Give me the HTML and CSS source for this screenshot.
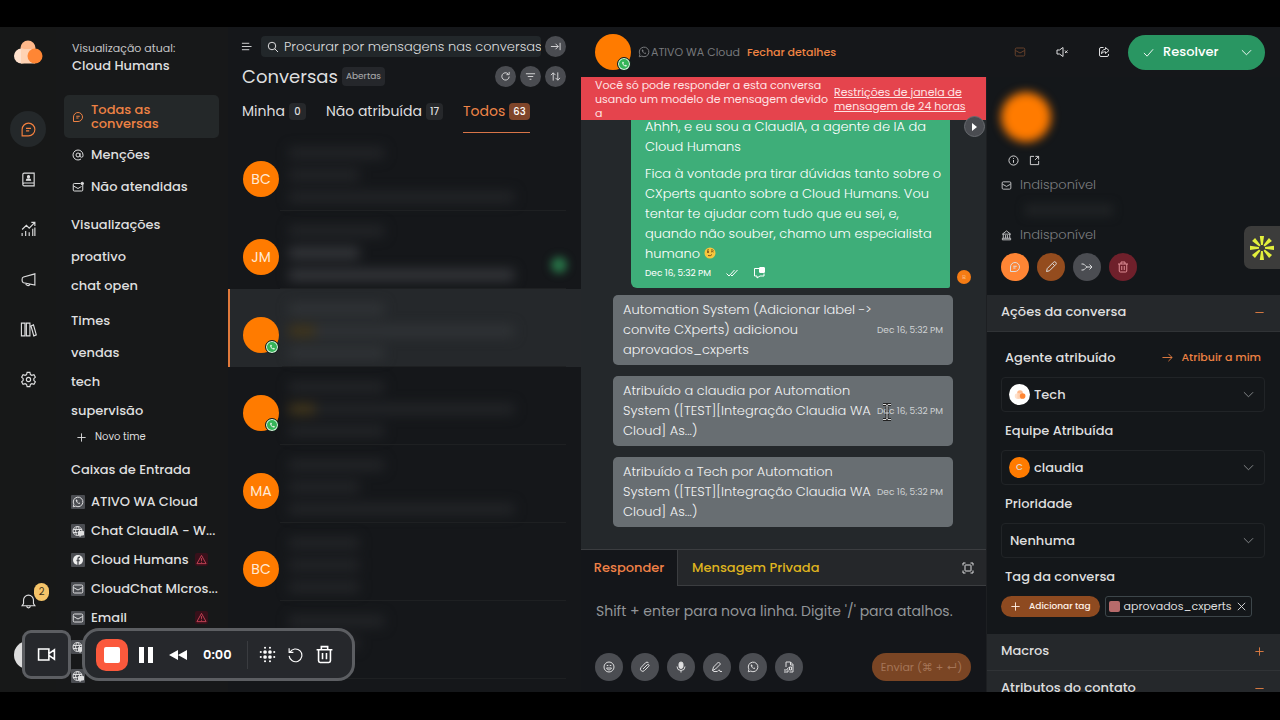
FILE: index.html
```html
<!DOCTYPE html>
<html lang="pt-BR">
<head>
  <meta charset="UTF-8" />
  <meta name="viewport" content="width=device-width, initial-scale=1.0"/>
  <title>Conversas</title>
  <link rel="stylesheet" href="styles.css">
</head>
<body>

  <!-- Icon set -->
  <svg class="sprite" aria-hidden="true">
    <symbol id="chat" viewBox="0 0 24 24"><path d="M3 21V12a9 9 0 1 1 9 9zM8.500 10.500h7M8.500 14h4.500"/></symbol>
    <symbol id="book" viewBox="0 0 24 24"><path d="M4 19V5a2 2 0 0 1 2-2h14v18H6a2 2 0 0 1-2-2zm0 0a2 2 0 0 1 2-2h14"/><circle cx="12" cy="8" r="1.500" fill="currentColor"/><path d="M9 13c0-2.500 6-2.500 6 0z" fill="currentColor"/></symbol>
    <symbol id="chart" viewBox="0 0 24 24"><path d="M3 21v-4M8 21v-7M13 21v-5M18 21V11M21 21V9M3 12l6-6 4 4 8-8M16 2h5v5"/></symbol>
    <symbol id="horn" viewBox="0 0 24 24"><path d="M21 4v16L5 16.500a3 3 0 0 1-2-3v-2a3 3 0 0 1 2-3zM8 17c0 4 5 5 6 1.500"/></symbol>
    <symbol id="library" viewBox="0 0 24 24"><path d="M2 3h5v18H2zM9 3h5v18H9zM15.500 7l3.500-1.500 4 14-3.500 1.500z"/></symbol>
    <symbol id="gear" viewBox="0 0 24 24"><circle cx="12" cy="12" r="3"/><path d="M10 2h4l.7 3 2 1.100 3-.8 2 3.400-2.200 2.200v2.200l2.200 2.200-2 3.400-3-.8-2 1.100L14 22h-4l-.7-3-2-1.100-3 .8-2-3.400 2.200-2.200v-2.200L2.300 8.700l2-3.400 3 .8 2-1.100z"/></symbol>
    <symbol id="bell" viewBox="0 0 24 24"><path d="M3 18h18l-2-3v-5a7 7 0 0 0-14 0v5zM9.500 18.500a2.500 2.500 0 0 0 5 0"/></symbol>
    <symbol id="at" viewBox="0 0 24 24"><circle cx="12" cy="12" r="4"/><path d="M16 8v5.500a3 3 0 0 0 6 0V12a10 10 0 1 0-4 8"/></symbol>
    <symbol id="mail" viewBox="0 0 24 24"><rect x="2.500" y="4" width="19" height="16" rx="2.500"/><path d="M3 9l9 5 9-5"/></symbol>
    <symbol id="mail-dot" viewBox="0 0 24 24"><path d="M17 5H4.500A2 2 0 0 0 2.500 7v11a2 2 0 0 0 2 2h15a2 2 0 0 0 2-2V8M3 10l9 5 7-4"/><circle cx="20.500" cy="5" r="2.500" fill="currentColor"/></symbol>
    <symbol id="plus" viewBox="0 0 24 24"><path d="M12 3v18M3 12h18"/></symbol>
    <symbol id="minus" viewBox="0 0 24 24"><path d="M3 12h18"/></symbol>
    <symbol id="close" viewBox="0 0 24 24"><path d="M4 4l16 16M20 4L4 20"/></symbol>
    <symbol id="whats" viewBox="0 0 24 24"><path d="M2.500 21.500l1.300-5A9.600 9.600 0 1 1 7.500 20.200z"/><path d="M8.500 7c-1.500 1-1.200 3.500 1.200 6s5 3.700 6.300 2.200c.7-.9.300-1.200-1.700-2.200l-1.200 1.200c-1.200-.5-2.300-1.600-2.800-2.800l1.100-1.300C10.500 7.500 9.500 6.500 8.500 7z" fill="currentColor" stroke="none"/></symbol>
    <symbol id="phone" viewBox="0 0 24 24"><path d="M7 3c-4 2-3 9 3 14.500s11 6 13 2c1-2 0-3-4.500-5l-3 3c-3-1.500-5.500-4-6.500-7l3-3C10.500 3 9 2 7 3z" fill="currentColor" stroke="none"/></symbol>
    <symbol id="globe" viewBox="0 0 24 24"><circle cx="11" cy="12" r="9"/><path d="M2 9h18M2 15h9M11 3c-5 5-5 13 0 18M11 3c3 3 4 6 4 9"/><path d="M13 13h10v7h-4l-3 3v-3h-3z" fill="currentColor"/></symbol>
    <symbol id="facebook" viewBox="0 0 24 24"><circle cx="12" cy="12" r="10" fill="#eee" stroke="none"/><path d="M16 6.500h-1.500c-2 0-2.500 1-2.500 2.500v13M9 13h6.500" stroke="#4b4d52" stroke-width="2.600"/></symbol>
    <symbol id="warn" viewBox="0 0 24 24"><path d="M12 3L2 21h20zM12 9v6M12 17v2"/></symbol>
    <symbol id="menu" viewBox="0 0 24 24"><path d="M2 5h16M2 12h21M2 19h16"/></symbol>
    <symbol id="search" viewBox="0 0 24 24"><circle cx="10" cy="10" r="7.500"/><path d="M15.500 15.500L22 22"/></symbol>
    <symbol id="to-right" viewBox="0 0 24 24"><path d="M2 12h16M12 6l6 6-6 6M22 4v16"/></symbol>
    <symbol id="refresh" viewBox="0 0 24 24"><path d="M20 12a8 8 0 1 1-2.500-6M20 2v6h-6"/></symbol>
    <symbol id="filter" viewBox="0 0 24 24"><path d="M2 6h20M6 12h12M10 18h4"/></symbol>
    <symbol id="sort" viewBox="0 0 24 24"><path d="M7 21V4M2 9l5-5 5 5M17 3v17M12 15l5 5 5-5"/></symbol>
    <symbol id="mute" viewBox="0 0 24 24"><path d="M2 8h5l7-5v18l-7-5H2zM18 9l5 5M23 9l-5 5"/></symbol>
    <symbol id="share" viewBox="0 0 24 24"><path d="M11 3H6a3 3 0 0 0-3 3v12a3 3 0 0 0 3 3h12a3 3 0 0 0 3-3v-2M15 3l7 6-7 6v-3.500c-4 0-6 1-8 4 0-5 3-9 8-9z"/></symbol>
    <symbol id="check" viewBox="0 0 24 24"><path d="M2 13l7 7L22 5"/></symbol>
    <symbol id="checks" viewBox="0 0 24 24"><path d="M1 13l5 5L17 6M10 16l2 2L23 6"/></symbol>
    <symbol id="bubble" viewBox="0 0 24 24"><path d="M12 3H3v15h5v4l6-4h8v-5"/><rect x="13" y="1" width="10" height="10" rx="1" fill="currentColor"/></symbol>
    <symbol id="down" viewBox="0 0 24 24"><path d="M2 7l10 10L22 7"/></symbol>
    <symbol id="info" viewBox="0 0 24 24"><circle cx="12" cy="12" r="10"/><path d="M12 11v6M12 6.500v2"/></symbol>
    <symbol id="open" viewBox="0 0 24 24"><path d="M11 3H3v18h18v-8M14 3h7v7M21 3l-8 8"/></symbol>
    <symbol id="bank" viewBox="0 0 24 24"><path d="M12 2L3 9h18zM5 9v9M10 11v7M14 11v7M19 9v9M3 18h18v3.500H3z"/></symbol>
    <symbol id="pencil" viewBox="0 0 24 24"><path d="M3 21l1.500-6L17 2.500a2.500 2.500 0 0 1 4.500 4.500L9 19.500zM15 5l4 4"/></symbol>
    <symbol id="merge" viewBox="0 0 24 24"><path d="M1 6h3c4 0 5 6 9 6h9M1 18h3c4 0 5-6 9-6M17 7l5 5-5 5"/></symbol>
    <symbol id="trash" viewBox="0 0 24 24"><path d="M2 6h20M8 6V2h8v4M4.500 6v14a2 2 0 0 0 2 2h11a2 2 0 0 0 2-2V6M9.500 10v8M14.500 10v8"/></symbol>
    <symbol id="arrow" viewBox="0 0 24 24"><path d="M1 12h21M14 4l8 8-8 8"/></symbol>
    <symbol id="expand" viewBox="0 0 24 24"><rect x="6" y="6" width="12" height="12" rx="1"/><path d="M2 7V2h5M17 2h5v5M22 17v5h-5M7 22H2v-5"/></symbol>
    <symbol id="smile" viewBox="0 0 24 24"><circle cx="12" cy="12" r="10"/><path d="M7 14c2 5 8 5 10 0zM7.500 9h3M13.500 9h3"/></symbol>
    <symbol id="clip" viewBox="0 0 24 24"><path d="M8 16l8.500-8.500a2 2 0 0 1 3 3L11 19a4.500 4.500 0 0 1-7-6l9-9.500a4.500 4.500 0 0 1 6 0"/></symbol>
    <symbol id="mic" viewBox="0 0 24 24"><rect x="8" y="2" width="8" height="13" rx="4" fill="currentColor"/><path d="M4 11a8 8 0 0 0 16 0M12 19v4"/></symbol>
    <symbol id="sign" viewBox="0 0 24 24"><path d="M3 19l2-7L15 2l4 4L9 16zM3 19l3 2h6c2 0 2-3 5-3l1 3h4"/></symbol>
    <symbol id="file" viewBox="0 0 24 24"><path d="M6 12V2h9l5 5v15h-7M15 2v6h5M2 18h5l4-5M2 22h8v-5M13 12v6h4v-6z"/></symbol>
    <symbol id="camera" viewBox="0 0 24 24"><path d="M2 5h13v14H2zM15 11l7-5v12l-7-5z"/></symbol>
    <symbol id="blur" viewBox="0 0 24 24"><g fill="currentColor" stroke="none"><circle cx="8.500" cy="8.500" r="2.600"/><circle cx="15.500" cy="8.500" r="2.600"/><circle cx="8.500" cy="15.500" r="2.600"/><circle cx="15.500" cy="15.500" r="2.600"/><circle cx="8.500" cy="2.500" r="1.500"/><circle cx="15.500" cy="2.500" r="1.500"/><circle cx="8.500" cy="21.500" r="1.500"/><circle cx="15.500" cy="21.500" r="1.500"/><circle cx="2.500" cy="8.500" r="1.500"/><circle cx="2.500" cy="15.500" r="1.500"/><circle cx="21.500" cy="8.500" r="1.500"/><circle cx="21.500" cy="15.500" r="1.500"/></g></symbol>
    <symbol id="undo" viewBox="0 0 24 24"><path d="M4 9a9 9 0 1 1-1 5M3 3v6h6"/></symbol>
    <symbol id="cloud" viewBox="0 0 30 24"><circle cx="15" cy="8" r="7.500" fill="#ffb88a"/><circle cx="8.500" cy="16" r="7.500" fill="#ffe1cd"/><path d="M8 9h14v14.500H8z" fill="#ffd2b3"/><circle cx="22" cy="16" r="7.500" fill="#ff8634"/></symbol>
  </svg>

  <div class="app">

    <!-- Icon rail -->
    <nav class="rail" aria-label="Principal">
      <svg class="logo"><use href="#cloud"/></svg>
      <button class="rail-btn active" aria-label="Conversas"><svg class="icon md"><use href="#chat"/></svg></button>
      <button class="rail-btn" aria-label="Contatos"><svg class="icon md"><use href="#book"/></svg></button>
      <button class="rail-btn" aria-label="Relatórios"><svg class="icon md"><use href="#chart"/></svg></button>
      <button class="rail-btn" aria-label="Campanhas"><svg class="icon md"><use href="#horn"/></svg></button>
      <button class="rail-btn" aria-label="Ajuda"><svg class="icon md"><use href="#library"/></svg></button>
      <button class="rail-btn" aria-label="Configurações"><svg class="icon md"><use href="#gear"/></svg></button>
      <button class="rail-btn bell" aria-label="Notificações"><svg class="icon md"><use href="#bell"/></svg><span class="count">2</span></button>
      <span class="me"></span>
    </nav>

    <!-- Sidebar -->
    <aside class="sidebar">
      <div class="account">
        <p>Visualização atual:</p>
        <strong>Cloud Humans</strong>
      </div>
      <a class="main-link active" href="#"><svg class="icon sm"><use href="#chat"/></svg><span>Todas as<br>conversas</span></a>
      <a class="main-link" href="#"><svg class="icon sm"><use href="#at"/></svg>Menções</a>
      <a class="main-link" href="#"><svg class="icon sm"><use href="#mail-dot"/></svg>Não atendidas</a>

      <h2>Visualizações</h2>
      <a class="side-link" href="#">proativo</a>
      <a class="side-link" href="#">chat open</a>

      <h2>Times</h2>
      <a class="side-link" href="#">vendas</a>
      <a class="side-link" href="#">tech</a>
      <a class="side-link" href="#">supervisão</a>
      <button class="new-team"><svg class="icon xs"><use href="#plus"/></svg>Novo time</button>

      <h2>Caixas de Entrada</h2>
      <a class="side-link" href="#"><i class="box"><svg class="icon sm"><use href="#whats"/></svg></i>ATIVO WA Cloud</a>
      <a class="side-link" href="#"><i class="box"><svg class="icon sm"><use href="#globe"/></svg></i>Chat ClaudIA - W...</a>
      <a class="side-link" href="#"><i class="box"><svg class="icon sm"><use href="#facebook"/></svg></i>Cloud Humans<i class="alert"><svg class="icon xs"><use href="#warn"/></svg></i></a>
      <a class="side-link" href="#"><i class="box"><svg class="icon sm"><use href="#mail"/></svg></i>CloudChat MIcros...</a>
      <a class="side-link" href="#"><i class="box"><svg class="icon sm"><use href="#mail"/></svg></i>Email<i class="alert"><svg class="icon xs"><use href="#warn"/></svg></i></a>
      <a class="side-link" href="#" aria-label="Site"><i class="box"><svg class="icon sm"><use href="#globe"/></svg></i></a>
      <a class="side-link" href="#" aria-label="Site"><i class="box"><svg class="icon sm"><use href="#globe"/></svg></i></a>
    </aside>

    <!-- Conversation list -->
    <section class="list">
      <div class="list-search">
        <button class="plain" aria-label="Menu"><svg class="icon xs"><use href="#menu"/></svg></button>
        <label class="search"><svg class="icon sm"><use href="#search"/></svg><input type="text" aria-label="Procurar" placeholder="Procurar por mensagens nas conversas"></label>
        <button class="round" aria-label="Recolher"><svg class="icon xs"><use href="#to-right"/></svg></button>
      </div>
      <div class="list-title">
        <h1>Conversas</h1>
        <span class="status">Abertas</span>
        <div class="tools">
          <button class="round" aria-label="Atualizar"><svg class="icon xs"><use href="#refresh"/></svg></button>
          <button class="round" aria-label="Filtrar"><svg class="icon xs"><use href="#filter"/></svg></button>
          <button class="round" aria-label="Ordenar"><svg class="icon xs"><use href="#sort"/></svg></button>
        </div>
      </div>
      <div class="tabs">
        <button class="tab">Minha <span>0</span></button>
        <button class="tab">Não atribuída <span>17</span></button>
        <button class="tab active">Todos <span>63</span></button>
      </div>

      <div class="rows">
        <article class="row"><span class="avatar">BC</span><div class="hidden-text"><i class="w-m"></i><i class="w-s"></i><i class="w-l"></i></div></article>
        <article class="row"><span class="avatar">JM</span><div class="hidden-text bright"><i class="w-m"></i><i class="w-s"></i><i class="w-l"></i></div><span class="unread"></span></article>
        <article class="row selected"><span class="avatar"><b class="wa"><svg class="icon"><use href="#phone"/></svg></b></span><div class="hidden-text"><i class="w-m"></i><i class="w-l emoji"></i><i class="w-m"></i></div></article>
        <article class="row"><span class="avatar"><b class="wa"><svg class="icon"><use href="#phone"/></svg></b></span><div class="hidden-text"><i class="w-m"></i><i class="w-l emoji"></i><i class="w-m"></i></div></article>
        <article class="row"><span class="avatar">MA</span><div class="hidden-text"><i class="w-m"></i><i class="w-s"></i><i class="w-l"></i></div></article>
        <article class="row"><span class="avatar">BC</span><div class="hidden-text"><i class="w-s"></i><i class="w-s"></i><i class="w-s"></i></div></article>
        <article class="row"><span class="avatar"></span><div class="hidden-text"><i class="w-m"></i><i class="w-s"></i></div></article>
      </div>
    </section>

    <!-- Open conversation -->
    <main class="conversation">
      <header class="topbar">
        <span class="avatar"><b class="wa"><svg class="icon"><use href="#phone"/></svg></b></span>
        <span class="inbox"><svg class="icon sm"><use href="#whats"/></svg>ATIVO WA Cloud</span>
        <button class="plain details-link">Fechar detalhes</button>
        <div class="top-actions">
          <button class="plain dim" aria-label="Email"><svg class="icon sm"><use href="#mail"/></svg></button>
          <button class="plain" aria-label="Silenciar"><svg class="icon sm"><use href="#mute"/></svg></button>
          <button class="plain" aria-label="Compartilhar"><svg class="icon sm"><use href="#share"/></svg></button>
          <div class="resolve">
            <button><svg class="icon xs"><use href="#check"/></svg>Resolver</button>
            <button aria-label="Mais opções"><svg class="icon xs"><use href="#down"/></svg></button>
          </div>
        </div>
      </header>

      <div class="panes">
        <section class="chat">
          <div class="banner">
            <p>Você só pode responder a esta conversa<br>usando um modelo de mensagem devido<br>a</p>
            <a href="#">Restrições de janela de<br>mensagem de 24 horas</a>
          </div>
          <div class="messages">
            <div class="sent">
              <div class="bubble">
                <p>Ahhh, e eu sou a ClaudIA, a agente de IA da<br>Cloud Humans</p>
                <p>Fica à vontade pra tirar dúvidas tanto sobre o<br>CXperts quanto sobre a Cloud Humans. Vou<br>tentar te ajudar com tudo que eu sei, e,<br>quando não souber, chamo um especialista<br>humano
                  <svg class="face" viewBox="0 0 24 24"><circle cx="12" cy="12" r="11" fill="#f8c63d"/><circle cx="8" cy="10" r="1.800" fill="#5d3b12"/><path d="M14 10q2.500-2 5 0M6 6.500l4-1M14 6q3-1 5 1M8 17q5 2 8-2" fill="none" stroke="#5d3b12" stroke-width="1.600"/></svg></p>
                <div class="meta"><time>Dec 16, 5:32 PM</time><svg class="icon sm"><use href="#checks"/></svg><svg class="icon sm"><use href="#bubble"/></svg></div>
              </div>
              <span class="bot">B</span>
            </div>
            <div class="activity"><p>Automation System (Adicionar label -&gt;<br>convite CXperts) adicionou<br>aprovados_cxperts</p><time>Dec 16, 5:32 PM</time></div>
            <div class="activity"><p>Atribuído a claudia por Automation<br>System ([TEST][Integração Claudia WA<br>Cloud] As...)</p><time>Dec 16, 5:32 PM</time>
              <svg class="cursor" viewBox="0 0 10 18"><path d="M1 1.500h3l1 1 1-1h3M1 16.500h3l1-1 1 1h3M5 2v14M3 10h4" stroke="#222" stroke-width="3" fill="none"/><path d="M1 1.500h3l1 1 1-1h3M1 16.500h3l1-1 1 1h3M5 2v14M3 10h4" stroke="#ddd" fill="none"/></svg></div>
            <div class="activity"><p>Atribuído a Tech por Automation<br>System ([TEST][Integração Claudia WA<br>Cloud] As...)</p><time>Dec 16, 5:32 PM</time></div>
          </div>
          <button class="toggle" aria-label="Alternar painel"></button>

          <div class="composer">
            <div class="reply-tabs">
              <button class="reply">Responder</button>
              <div class="reply-rest">
                <button class="private">Mensagem Privada</button>
                <button class="plain" aria-label="Expandir"><svg class="icon sm"><use href="#expand"/></svg></button>
              </div>
            </div>
            <textarea aria-label="Mensagem" placeholder="Shift + enter para nova linha. Digite '/' para atalhos."></textarea>
            <div class="reply-tools">
              <button aria-label="Emoji"><svg class="icon sm"><use href="#smile"/></svg></button>
              <button aria-label="Anexo"><svg class="icon sm"><use href="#clip"/></svg></button>
              <button aria-label="Áudio"><svg class="icon sm"><use href="#mic"/></svg></button>
              <button aria-label="Assinatura"><svg class="icon sm"><use href="#sign"/></svg></button>
              <button aria-label="WhatsApp"><svg class="icon sm"><use href="#whats"/></svg></button>
              <button aria-label="Arquivo"><svg class="icon sm"><use href="#file"/></svg></button>
              <button class="send">Enviar (⌘ + ↵)</button>
            </div>
          </div>
        </section>

        <!-- Contact details -->
        <aside class="details">
          <div class="contact">
            <span class="photo"></span>
            <div class="contact-icons"><svg class="icon xs"><use href="#info"/></svg><svg class="icon xs"><use href="#open"/></svg></div>
            <p><svg class="icon xs"><use href="#mail"/></svg>Indisponível</p>
            <span class="phone"></span>
            <p><svg class="icon xs"><use href="#bank"/></svg>Indisponível</p>
            <div class="contact-actions">
              <button class="orange" aria-label="Nova mensagem"><svg class="icon sm"><use href="#chat"/></svg></button>
              <button class="brown" aria-label="Editar"><svg class="icon sm"><use href="#pencil"/></svg></button>
              <button class="gray" aria-label="Mesclar"><svg class="icon sm"><use href="#merge"/></svg></button>
              <button class="wine" aria-label="Excluir"><svg class="icon sm"><use href="#trash"/></svg></button>
            </div>
          </div>

          <button class="section-head">Ações da conversa<svg class="icon xs"><use href="#minus"/></svg></button>
          <div class="fields">
            <div class="field-top">
              <label for="agent">Agente atribuído</label>
              <button class="plain assign"><svg class="icon xs"><use href="#arrow"/></svg>Atribuir a mim</button>
            </div>
            <div class="select has-pic">
              <span class="pic white"><svg><use href="#cloud"/></svg></span>
              <select id="agent"><option>Tech</option></select>
              <svg class="icon xs"><use href="#down"/></svg>
            </div>
            <div class="field-top"><label for="team">Equipe Atribuída</label></div>
            <div class="select has-pic">
              <span class="pic">C</span>
              <select id="team"><option>claudia</option></select>
              <svg class="icon xs"><use href="#down"/></svg>
            </div>
            <div class="field-top"><label for="priority">Prioridade</label></div>
            <div class="select">
              <select id="priority"><option>Nenhuma</option></select>
              <svg class="icon xs"><use href="#down"/></svg>
            </div>
            <div class="field-top"><h3>Tag da conversa</h3></div>
            <div class="tags">
              <button class="add-tag"><svg class="icon xs"><use href="#plus"/></svg>Adicionar tag</button>
              <span class="tag"><i></i>aprovados_cxperts<button class="plain" aria-label="Remover tag"><svg class="icon xs"><use href="#close"/></svg></button></span>
            </div>
          </div>
          <button class="section-head">Macros<svg class="icon xs"><use href="#plus"/></svg></button>
          <button class="section-head">Atributos do contato<svg class="icon xs"><use href="#minus"/></svg></button>
        </aside>
      </div>
    </main>
  </div>

  <!-- Screen recorder -->
  <div class="recorder">
    <button class="cam" aria-label="Câmera"><svg class="icon lg"><use href="#camera"/></svg></button>
    <div class="controls">
      <button class="stop" aria-label="Parar"></button>
      <button class="pause" aria-label="Pausar"></button>
      <button class="plain" aria-label="Voltar"><svg class="rewind" viewBox="0 0 20 12"><path d="M10 1v10L1 6zM19 1v10l-9-5z"/></svg></button>
      <span class="time">0:00</span>
      <span class="divider"></span>
      <button class="plain" aria-label="Desfocar"><svg class="icon md"><use href="#blur"/></svg></button>
      <button class="plain" aria-label="Reiniciar"><svg class="icon md"><use href="#undo"/></svg></button>
      <button class="plain" aria-label="Descartar"><svg class="icon lg"><use href="#trash"/></svg></button>
    </div>
  </div>

  <button class="widget" aria-label="Assistente">
    <svg viewBox="-12 -12 24 24">
      <g id="ray"><path d="M-1 -3L-2.200 -12H2L.8 -3z"/><path d="M-1 3L-2.200 12H2L.8 3z"/></g>
      <use href="#ray" transform="rotate(45)"/><use href="#ray" transform="rotate(90)"/><use href="#ray" transform="rotate(135)"/>
    </svg>
  </button>

</body>
</html>
```
FILE: styles.css
```css
* {
  box-sizing: border-box;
  margin: 0;
  padding: 0;
}

body {
  display: flex;
  height: 100vh;
  padding: 27px 0 28px;
  overflow: hidden;
  background: #000;
  color: #dededf;
  font-family: Poppins, Inter, sans-serif;
  font-size: 13px;
}

button, input, textarea, select {
  font: inherit;
  color: inherit;
  background: none;
  border: none;
  outline: none;
}

button {
  cursor: pointer;
  display: flex;
  align-items: center;
  justify-content: center;
  white-space: nowrap;
}

a {
  color: inherit;
  text-decoration: none;
}

i {
  font-style: normal;
}

.sprite {
  position: absolute;
  width: 0;
  height: 0;
}

.icon {
  flex: none;
  fill: none;
  stroke: currentColor;
  stroke-width: 1.6;
}

.icon.xs { width: 11px; height: 11px; stroke-width: 2; }
.icon.sm { width: 12px; height: 12px; stroke-width: 2; }
.icon.md { width: 17px; height: 17px; }
.icon.lg { width: 19px; height: 19px; stroke-width: 2; }

.app {
  flex: 1;
  min-width: 0;
  display: flex;
  overflow: hidden;
  background: #15171a;
}

/* Icon rail */
.rail {
  width: 56px;
  flex: none;
  display: flex;
  flex-direction: column;
  align-items: center;
  gap: 14px;
  padding-top: 13px;
  background: #171818;
}

.logo {
  width: 30px;
  height: 24px;
  margin-bottom: 33px;
}

.rail-btn {
  position: relative;
  width: 36px;
  height: 36px;
  flex: none;
  border-radius: 50%;
}

.rail-btn.active {
  background: #24282a;
  color: #f5813f;
}

.bell {
  margin-top: auto;
  margin-bottom: 8px;
}

.count {
  position: absolute;
  top: 0;
  right: -3px;
  width: 15px;
  line-height: 18px;
  border-radius: 8px;
  background: #f5c469;
  color: #3d3018;
  font-size: 10px;
}

.me {
  width: 28px;
  height: 28px;
  margin-bottom: 23px;
  border-radius: 50%;
  background: #ddd;
}

/* Sidebar */
.sidebar {
  width: 172px;
  flex: none;
  padding: 13px 9px 0 8px;
  overflow: hidden;
  background: #171819;
  font-weight: 500;
}

.account {
  padding: 0 8px;
  margin-bottom: 21px;
  line-height: 17px;
}

.account p {
  font-size: 11px;
  font-weight: 400;
  line-height: 17px;
  color: #c4c4c6;
}

.account strong {
  display: block;
  font-weight: 500;
}

.main-link {
  display: flex;
  align-items: center;
  gap: 7px;
  height: 32px;
  padding: 0 8px;
}

.main-link.active {
  height: 43px;
  margin-bottom: 1px;
  border-radius: 5px;
  line-height: 14px;
  background: #242829;
  color: #ee8244;
}

.sidebar h2 {
  font-size: 13px;
  font-weight: 500;
  line-height: 20px;
  padding: 0 7px;
  margin: 11px 0 7px;
}

.main-link + h2 {
  margin-top: 12px;
}

.side-link {
  display: flex;
  align-items: center;
  height: 29px;
  gap: 6px;
  padding: 0 7px;
  white-space: nowrap;
}

.new-team {
  height: 24px;
  gap: 8px;
  padding: 0 12px;
  font-size: 10px;
  font-weight: 400;
}

.box {
  display: flex;
  padding: 1px;
  border-radius: 1px;
  background: #4b4d52;
}

.alert {
  margin-left: auto;
  margin-right: 4px;
  padding: 1px;
  display: flex;
  border-radius: 2px;
  background: #38101a;
  color: #c84457;
}

/* Conversation list */
.list {
  width: 353px;
  flex: none;
  display: flex;
  flex-direction: column;
  overflow: hidden;
  background: #15171a;
}

.list-search {
  display: flex;
  align-items: center;
  gap: 4px;
  padding: 9px 15px 0 13px;
}

.plain {
  flex: none;
}

.search {
  flex: 1;
  min-width: 0;
  display: flex;
  align-items: center;
  gap: 5px;
  height: 21px;
  margin-left: 5px;
  padding: 0 0 0 6px;
  border-radius: 4px;
  background: #22272a;
}

.search input {
  flex: 1;
  min-width: 0;
  font-weight: 300;
}

.search input::placeholder {
  color: #dcdddf;
}

.round {
  width: 21px;
  height: 21px;
  flex: none;
  border-radius: 50%;
  background: #4a4c51;
}

.list-title {
  display: flex;
  align-items: center;
  gap: 4px;
  height: 21px;
  margin: 9px 15px 0 14px;
}

.list-title h1 {
  font-size: 18px;
  font-weight: 400;
}

.status {
  padding: 0 4px;
  line-height: 19px;
  border-radius: 4px;
  background: #25272b;
  color: #adaeb0;
  font-size: 9px;
}

.tools {
  display: flex;
  gap: 4px;
  margin-left: auto;
}

.tabs {
  display: flex;
  gap: 20px;
  height: 46px;
  margin: 0 15px 0 14px;
}

.tab {
  gap: 4px;
  padding-top: 4px;
  border-bottom: 1px solid transparent;
  font-size: 14px;
}

.tab span {
  min-width: 17px;
  padding: 0 4px;
  border-radius: 4px;
  background: #26282b;
  font-size: 10px;
  font-weight: 500;
  line-height: 17px;
}

.tab.active {
  color: #ef8548;
  border-bottom-color: #d87548;
}

.tab.active span {
  background: #7f452a;
  color: #fff;
}

.rows {
  flex: 1;
  overflow: hidden;
}

.row {
  position: relative;
  display: flex;
  gap: 10px;
  height: 78px;
  padding: 0 15px;
}

.row::after {
  content: "";
  position: absolute;
  bottom: 0;
  left: 52px;
  right: 15px;
  height: 1px;
  background: #1e2022;
}

.row.selected {
  background: #25282b;
  border-left: 2px solid #e0793b;
  padding-left: 13px;
}

.row .avatar {
  margin-top: 28px;
}

.avatar {
  position: relative;
  display: flex;
  align-items: center;
  justify-content: center;
  width: 36px;
  height: 36px;
  flex: none;
  border-radius: 50%;
  background: #ff7b00;
  color: #ffe9d5;
  font-size: 14px;
}

.wa {
  position: absolute;
  right: 0;
  bottom: -1px;
  display: flex;
  align-items: center;
  justify-content: center;
  width: 14px;
  height: 14px;
  border: 1px solid #15171a;
  border-radius: 50%;
  background: #35b458;
  box-shadow: inset 0 0 0 1px #e6f6ea;
  color: #e6f6ea;
}

.wa .icon {
  width: 6px;
  height: 6px;
}

.hidden-text {
  flex: 1;
  display: flex;
  flex-direction: column;
  gap: 10px;
  padding-top: 14px;
  filter: blur(6px);
}

.hidden-text i {
  height: 12px;
  background: #222427;
}

.bright i + i {
  background: #34363a;
}

.selected .hidden-text i {
  background: #303336;
}

.w-s { width: 70px; }
.w-m { width: 95px; }
.w-l { width: 225px; }

.hidden-text .emoji {
  border-left: 26px solid #41361d;
}

.unread {
  position: absolute;
  right: 14px;
  top: 46px;
  width: 16px;
  height: 16px;
  border-radius: 50%;
  background: #287548;
  filter: blur(4px);
}

/* Conversation */
.conversation {
  flex: 1;
  min-width: 0;
  display: flex;
  flex-direction: column;
}

.topbar {
  display: flex;
  align-items: center;
  height: 50px;
  flex: none;
  padding: 0 15px 0 14px;
}

.inbox {
  display: flex;
  align-items: center;
  gap: 1px;
  margin: 0 7px;
  color: #77797c;
  font-size: 11px;
  white-space: nowrap;
}

.details-link {
  color: #ef8443;
  font-size: 11px;
  font-weight: 500;
}

.top-actions {
  display: flex;
  align-items: center;
  gap: 30px;
  margin-left: auto;
}

.dim {
  color: #66412b;
}

.resolve {
  display: flex;
  justify-content: space-between;
  width: 137px;
  height: 35px;
  margin-left: -12px;
  padding: 0 13px 0 15px;
  border-radius: 18px;
  background: #299662;
  color: #fff;
}

.resolve button {
  gap: 9px;
  font-weight: 500;
}

.panes {
  flex: 1;
  min-height: 0;
  display: flex;
}

.chat {
  position: relative;
  flex: 1;
  min-width: 0;
  display: flex;
  flex-direction: column;
}

.banner {
  display: flex;
  align-items: center;
  gap: 6px;
  height: 43px;
  flex: none;
  padding-left: 14px;
  background: #e5444d;
  color: #ffe3e4;
  font-size: 11px;
  line-height: 14px;
  white-space: nowrap;
}

.banner p {
  flex: none;
}

.banner a {
  text-decoration: underline;
}

.messages {
  flex: 1;
  min-height: 0;
  display: flex;
  flex-direction: column;
  justify-content: flex-end;
  gap: 11px;
  overflow: hidden;
  padding: 0 33px 22px 32px;
  background: #24282b;
  font-weight: 300;
  line-height: 20px;
}

.sent {
  position: relative;
  display: flex;
  align-items: flex-end;
  justify-content: flex-end;
  flex: none;
  margin: 0 3px -4px 0;
}

.bubble {
  width: 319px;
  padding: 10px 14px 6px;
  border-radius: 6px 0 2px 6px;
  background: #3eae79;
  color: #fff;
  white-space: nowrap;
}

.bubble p {
  margin-bottom: 7px;
}

.bubble p + p {
  margin-bottom: 0;
}

.face {
  width: 12px;
  height: 12px;
  vertical-align: -1px;
}

.meta {
  display: flex;
  align-items: center;
  gap: 15px;
  height: 18px;
}

time {
  font-size: 9px;
  font-weight: 400;
  white-space: nowrap;
}

.bot {
  position: absolute;
  right: -21px;
  bottom: 4px;
  width: 14px;
  height: 14px;
  border-radius: 50%;
  background: #f57c14;
  color: #ffc99b;
  font-size: 6px;
  line-height: 14px;
  text-align: center;
}

.activity {
  position: relative;
  display: flex;
  align-items: center;
  justify-content: space-between;
  flex: none;
  padding: 5px 10px;
  border-radius: 5px;
  background: #686e72;
  color: #f2f3f4;
  white-space: nowrap;
}

.activity time {
  color: #cfd2d4;
}

.cursor {
  position: absolute;
  right: 61px;
  top: 27px;
  width: 10px;
  height: 18px;
}

.toggle {
  position: absolute;
  right: 1px;
  top: 39px;
  width: 21px;
  height: 21px;
  border: 1px solid #686b70;
  border-radius: 50%;
  background: #4a4c51;
}

.toggle::before {
  content: "";
  border: 4px solid transparent;
  border-left: 5px solid #fff;
  border-right: none;
}

.composer {
  flex: none;
  background: #14161a;
}

.reply-tabs {
  display: flex;
  height: 37px;
  border-top: 1px solid #3b3d40;
  font-weight: 500;
}

.reply {
  width: 96px;
  color: #f08147;
}

.reply-rest {
  flex: 1;
  display: flex;
  justify-content: space-between;
  padding: 0 12px 0 14px;
  border-left: 1px solid #3b3d40;
  border-bottom: 1px solid #3b3d40;
  background: #25272a;
}

.private {
  color: #dfb31f;
}

textarea {
  display: block;
  width: 100%;
  height: 63px;
  padding: 14px 12px 0 15px;
  resize: none;
  font-size: 14px;
  line-height: 22px;
}

textarea::placeholder {
  color: #929598;
}

.reply-tools {
  display: flex;
  gap: 8px;
  padding: 4px 15px 11px 14px;
}

.reply-tools button, .contact-actions button {
  width: 28px;
  height: 28px;
  border-radius: 50%;
  background: #4b4d52;
}

.reply-tools .send {
  width: 99px;
  margin-left: auto;
  border-radius: 14px;
  background: #7a4524;
  color: #a57558;
  font-size: 11px;
}

/* Contact details */
.details {
  width: 294px;
  flex: none;
  overflow: hidden;
  background: #14171a;
  border-left: 1px solid #1d1f22;
}

.contact {
  height: 218px;
  padding: 15px 14px 0;
}

.photo {
  display: block;
  width: 50px;
  height: 50px;
  border-radius: 50%;
  background: #ff7b00;
  filter: blur(5px);
}

.contact-icons {
  display: flex;
  gap: 10px;
  padding: 13px 7px 9px;
}

.contact p {
  display: flex;
  align-items: center;
  gap: 8px;
  height: 20px;
  color: #7c7e80;
  font-weight: 300;
}

.contact p .icon {
  color: #c7c8ca;
}

.phone {
  display: block;
  width: 88px;
  height: 12px;
  margin: 9px 24px;
  background: #1f2224;
  filter: blur(5px);
}

.contact-actions {
  display: flex;
  gap: 8px;
  padding-top: 8px;
}

.contact-actions .orange { background: #ff8534; }
.contact-actions .brown { background: #944c1e; }
.contact-actions .gray { background: #4b4d52; }
.contact-actions .wine { background: #6f202b; color: #e08e96; }

.section-head {
  width: 100%;
  height: 37px;
  padding: 0 15px 2px 14px;
  justify-content: space-between;
  background: #25282b;
  border-bottom: 1px solid #303336;
  font-weight: 500;
}

.section-head .icon {
  color: #e47f43;
}

.fields {
  padding: 16px 15px 17px 14px;
  font-weight: 500;
}

.field-top {
  display: flex;
  justify-content: space-between;
  padding: 0 4px;
  line-height: 19px;
  margin-bottom: 10px;
}

.field-top h3 {
  font-size: 13px;
  font-weight: 500;
}

.assign {
  gap: 8px;
  color: #ec8143;
  font-size: 11px;
}

.select {
  position: relative;
  margin-bottom: 9px;
}

.select select {
  display: block;
  width: 100%;
  height: 35px;
  padding: 0 8px;
  appearance: none;
  border: 1px solid #212427;
  border-radius: 4px;
}

.has-pic select {
  padding-left: 32px;
}

.select > .icon {
  position: absolute;
  right: 11px;
  top: 12px;
  color: #8d8f92;
}

.pic {
  position: absolute;
  left: 8px;
  top: 7px;
  width: 21px;
  height: 21px;
  display: flex;
  align-items: center;
  justify-content: center;
  border-radius: 50%;
  background: #ff7b00;
  font-size: 9px;
}

.pic.white {
  background: #fff;
}

.pic svg {
  width: 12px;
  height: 9px;
}

.tags {
  display: flex;
  gap: 5px;
}

.add-tag {
  height: 21px;
  gap: 8px;
  padding: 0 9px;
  border-radius: 11px;
  background: #8e4a20;
  color: #fff0e6;
  font-size: 9px;
  font-weight: 500;
}

.tag {
  display: flex;
  align-items: center;
  gap: 4px;
  height: 21px;
  padding: 0 4px 0 3px;
  border: 1px solid #3d464a;
  border-radius: 3px;
  font-size: 11px;
  font-weight: 400;
}

.tag i {
  width: 11px;
  height: 11px;
  border-radius: 2px;
  background: #b76b6b;
}

/* Floating tools */
.recorder {
  position: absolute;
  left: 22px;
  bottom: 39px;
  display: flex;
  align-items: center;
  gap: 11px;
  color: #fff;
}

.cam {
  width: 49px;
  height: 49px;
  border: 3px solid #5c5e62;
  border-radius: 9px;
  background: #26282c;
}

.controls {
  display: flex;
  align-items: center;
  height: 53px;
  gap: 11px;
  padding: 0 18px 0 11px;
  border: 3px solid #5c5e62;
  border-radius: 17px;
  background: #26282c;
}

.stop {
  width: 32px;
  height: 32px;
  border-radius: 10px;
  background: #fb593c;
}

.stop::before {
  content: "";
  width: 16px;
  height: 16px;
  border-radius: 2px;
  background: #fff;
}

.pause {
  width: 14px;
  height: 16px;
  border-left: 5px solid #fff;
  border-right: 5px solid #fff;
}

.rewind {
  width: 20px;
  height: 12px;
  margin: 0 4px;
  fill: #fff;
}

.time {
  font-weight: 600;
}

.divider {
  width: 1px;
  height: 28px;
  margin-left: 4px;
  background: #3a3c40;
}

.widget {
  position: absolute;
  right: 0;
  top: 226px;
  width: 36px;
  height: 43px;
  border-radius: 7px 0 0 7px;
  background: #3c3c3b;
}

.widget svg {
  width: 24px;
  height: 24px;
  fill: #e3f03c;
}
```
